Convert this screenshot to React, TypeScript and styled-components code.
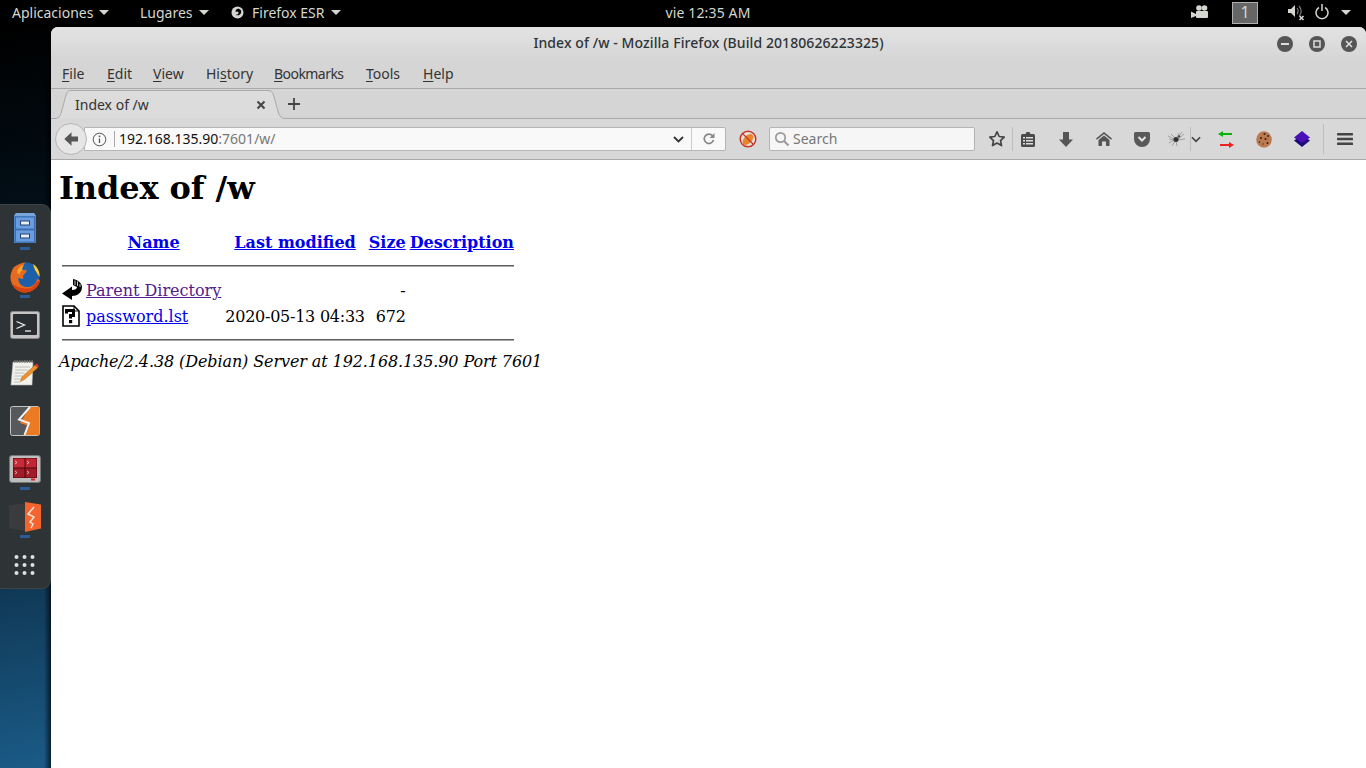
import React from "react";
import styled, { createGlobalStyle } from "styled-components";

const Global = createGlobalStyle`
  html, body { margin: 0; padding: 0; background: #000; overflow: hidden; }
  #root { width: 1366px; height: 768px; }
`;

const uiFont = `"Noto Sans", "Open Sans", sans-serif`;

const Screen = styled.div`
  width: 1366px;
  height: 768px;
  display: flex;
  flex-direction: column;
  overflow: hidden;
  background: #000;
  font-family: ${uiFont};
`;

/* ---------- GNOME top bar ---------- */
const TopBar = styled.header`
  height: 27px;
  flex: none;
  display: grid;
  grid-template-columns: 1fr auto 1fr;
  align-items: center;
  background: #000;
  color: #d3d7cf;
  font-size: 14px;
  padding-bottom: 3px;
  box-sizing: border-box;
`;
const TopLeft = styled.div`
  display: flex;
  align-items: center;
  padding-left: 12px;
`;
const TopMenu = styled.span<{ $w: number }>`
  display: flex;
  align-items: center;
  width: ${(p) => p.$w}px;
  white-space: nowrap;
`;
const Caret = styled.i`
  display: inline-block;
  width: 0;
  height: 0;
  margin-left: 6px;
  border-left: 5px solid transparent;
  border-right: 5px solid transparent;
  border-top: 5px solid #d3d7cf;
`;
const Clock = styled.div`
  margin-left: 50px;
  letter-spacing: 0.15px;
  white-space: nowrap;
`;
const TopRight = styled.div`
  display: flex;
  align-items: center;
  justify-content: flex-end;
  padding-right: 15px;
`;
const WorkspaceBox = styled.span`
  width: 26px;
  height: 22px;
  margin: 2px 30px 0 23px;
  padding-bottom: 2px;
  box-sizing: border-box;
  background: #666;
  border: 1px solid #b0b0b0;
  color: #d3d7cf;
  display: flex;
  align-items: center;
  justify-content: center;
  font-size: 16px;
`;

/* ---------- Desktop ---------- */
const Desktop = styled.div`
  flex: 1;
  display: flex;
  min-height: 0;
`;
const Wallpaper = styled.aside`
  width: 51px;
  flex: none;
  display: flex;
  flex-direction: column;
  justify-content: center;
  background:
    linear-gradient(90deg, transparent 44px, rgba(0, 0, 0, 0.65) 51px),
    linear-gradient(170deg, #000 0%, #020d15 22%, #0f3450 72%, #1a5b87 100%);
`;
const Dock = styled.nav`
  width: 51px;
  height: 385px;
  box-sizing: border-box;
  margin-top: -2px;
  background: #2e3335;
  border: 1px solid #3f4446;
  border-left: none;
  border-radius: 0 9px 9px 0;
`;
const DockItem = styled.div<{ $running?: boolean }>`
  height: 48px;
  display: flex;
  align-items: center;
  justify-content: center;
  position: relative;
  padding-right: 1px;
  &::after {
    content: "";
    display: ${(p) => (p.$running ? "block" : "none")};
    position: absolute;
    left: 20px;
    bottom: 3px;
    width: 10px;
    height: 3px;
    background: #2a5c99;
  }
`;

/* ---------- Firefox window ---------- */
const Window = styled.main`
  flex: 1;
  min-width: 0;
  display: flex;
  flex-direction: column;
  background: #fff;
  border-radius: 7px 7px 0 0;
  overflow: hidden;
`;
const TitleBar = styled.div`
  height: 33px;
  flex: none;
  box-sizing: border-box;
  padding-bottom: 2px;
  position: relative;
  display: flex;
  align-items: center;
  justify-content: center;
  background: linear-gradient(180deg, #e3e3e3 0%, #d5d5d5 100%);
  color: #2e3436;
  font-size: 14px;
  font-weight: 500;
  letter-spacing: 0.08px;
`;
const WindowButtons = styled.div`
  position: absolute;
  right: 9px;
  top: 9px;
  display: flex;
  gap: 16px;
`;
const WinButton = styled.span`
  width: 16px;
  height: 16px;
  border-radius: 50%;
  background: #555;
  display: flex;
  align-items: center;
  justify-content: center;
`;
const MenuBar = styled.div`
  flex: none;
  box-sizing: border-box;
  height: 29px;
  display: flex;
  align-items: center;
  padding: 0 0 1px 11px;
  background: #d5d5d5;
  border-bottom: 1px solid #a9a9a9;
  color: #333;
  font-size: 14px;
`;
const MenuItem = styled.span<{ $w: number; $tight?: boolean }>`
  width: ${(p) => p.$w}px;
  flex: none;
  white-space: nowrap;
  letter-spacing: ${(p) => (p.$tight ? "-0.55px" : "0")};
  u { text-underline-offset: 2px; }
`;
const TabBar = styled.div`
  height: 30px;
  flex: none;
  display: flex;
  background: #d5d5d5;
`;
const Tab = styled.div`
  width: 234px;
  flex: none;
  position: relative;
  display: flex;
  align-items: center;
  box-sizing: border-box;
  padding: 1px 19px 0 24px;
  color: #333;
  font-size: 14px;
`;
const TabShape = styled.svg`
  position: absolute;
  inset: 0;
`;
const TabTitle = styled.span`
  flex: 1;
  position: relative;
`;
const TabClose = styled.svg`
  position: relative;
`;
const TabRest = styled.div`
  flex: 1;
  display: flex;
  align-items: center;
  padding: 1px 0 0 2px;
  border-bottom: 1px solid #a9a9a9;
`;
const NavBar = styled.div`
  height: 40px;
  flex: none;
  position: relative;
  display: flex;
  align-items: center;
  background: #d8d8d8;
  border-bottom: 1px solid #a9a9a9;
  padding-left: 33px;
`;
const BackButton = styled.span`
  position: absolute;
  left: 4px;
  top: 4px;
  width: 32px;
  height: 32px;
  box-sizing: border-box;
  border-radius: 50%;
  border: 1px solid #b5b5b5;
  background: #e6e6e6;
  display: flex;
  align-items: center;
  justify-content: center;
  z-index: 1;
`;
const UrlBar = styled.div`
  width: 642px;
  height: 24px;
  box-sizing: border-box;
  display: flex;
  align-items: center;
  background: #f9f9f9;
  border: 1px solid #b5b5b5;
  border-radius: 0 2px 2px 0;
  padding-left: 7px;
  font-size: 14px;
  flex: none;
`;
const InfoSlot = styled.span`
  width: 22px;
  height: 16px;
  flex: none;
  display: flex;
  align-items: center;
  border-right: 1px solid #aaa;
  margin-right: 4px;
`;
const UrlText = styled.span`
  flex: 1;
  color: #111;
  padding-bottom: 1px;
  em { font-style: normal; color: #777; }
`;
const ChevronSlot = styled.span`
  width: 20px;
  box-sizing: border-box;
  padding-right: 6px;
  display: flex;
  align-items: center;
  justify-content: center;
`;
const ReloadSlot = styled.span`
  width: 33px;
  height: 22px;
  display: flex;
  align-items: center;
  justify-content: center;
  border-left: 1px solid #ccc;
`;
const BlockSlot = styled.span`
  width: 43px;
  flex: none;
  display: flex;
  justify-content: center;
`;
const SearchBox = styled.div`
  width: 206px;
  height: 24px;
  flex: none;
  box-sizing: border-box;
  display: flex;
  align-items: center;
  gap: 3px;
  padding: 0 0 1px 4px;
  background: #f6f6f6;
  border: 1px solid #b5b5b5;
  border-radius: 2px;
  color: #777;
  font-size: 14px;
`;
const ToolSlot = styled.span<{ $w: number; $ml?: number }>`
  width: ${(p) => p.$w}px;
  margin-left: ${(p) => p.$ml ?? 0}px;
  flex: none;
  display: flex;
  align-items: center;
  justify-content: center;
`;
const ToolSep = styled.span<{ $h: number; $ml?: number }>`
  width: 1px;
  height: ${(p) => p.$h}px;
  margin-left: ${(p) => p.$ml ?? 0}px;
  flex: none;
  background: #bdbdbd;
`;

/* ---------- Document ---------- */
const Page = styled.div`
  flex: 1;
  background: #fff;
  color: #000;
  padding: 9px 8px 8px;
  font-family: "DejaVu Serif", serif;
  font-size: 16px;
  overflow: hidden;
  a:link { color: #0000ee; }
  a.visited { color: #551a8b; }
  h1 { margin: 0 0 21.44px; font-size: 32px; letter-spacing: -0.1px; }
  hr {
    margin: 8px 0;
    height: 0;
    border: none;
    border-top: 1px solid #5f5f5f;
    border-bottom: 1px solid #a8a8a8;
  }
  table { border-spacing: 2px; }
  th, td { padding: 1px; }
  th { text-align: center; }
  address { font-style: italic; letter-spacing: -0.1px; }
  td svg { display: block; }
`;
const Gap = styled.span`
  display: block;
  width: 20px;
  height: 22px;
`;
const Right = styled.td`
  text-align: right;
`;
const NumCell = styled(Right)`
  letter-spacing: -0.25px;
`;

const BackIcon = () => (
  <svg width="16" height="16" viewBox="0 0 16 16">
    <path d="M8.500 1.200 1.300 8l7.200 6.800V10.600H15V5.400H8.500z" fill="#555" />
  </svg>
);

const Down = ({ color = "#555" }: { color?: string }) => (
  <svg width="11" height="7" viewBox="0 0 11 7">
    <path d="M1 1l4.500 4.500L10 1" fill="none" stroke={color} strokeWidth="1.800" />
  </svg>
);

const ParentIcon = () => (
  <svg width="20" height="22" viewBox="0 0 20 22">
    <path d="M11 0C16 1 20 4 20 8c0 6-5 9-10 9v4L0 14.500 10 7.500V11c3 0 5-1 5-3l-4-2z" fill="#000" />
    <path d="M13 1.500v4.500M15.500 2.500v4.500M18 5v3" stroke="#fff" strokeWidth=".8" />
  </svg>
);

const UnknownIcon = () => (
  <svg width="20" height="22" viewBox="0 0 20 22">
    <path d="M1 1h11l5 5v15H1z" fill="#fff" stroke="#000" strokeWidth="1.600" />
    <path d="M12 1v5h5" fill="none" stroke="#000" />
    <path d="M4.500 8.500V5.500h7v5H8.500v3" fill="none" stroke="#000" strokeWidth="3" />
    <rect x="7" y="15" width="3.200" height="3.200" fill="#000" />
  </svg>
);

const FilesIcon = () => (
  <svg width="24" height="32" viewBox="0 0 24 32">
    <path d="M3 0h18l2 3v27H1V3z" fill="#4a86cf" />
    <path d="M3 0h18l2 3H1z" fill="#7aa5dc" />
    <rect x="2.500" y="4" width="19" height="12" fill="#6a9de0" stroke="#2e5f9f" strokeWidth=".7" />
    <rect x="2.500" y="17" width="19" height="12" fill="#6a9de0" stroke="#2e5f9f" strokeWidth=".7" />
    <rect x="7.500" y="8" width="9" height="4" fill="#e8eef6" stroke="#22436f" />
    <rect x="7.500" y="21" width="9" height="4" fill="#e8eef6" stroke="#22436f" />
  </svg>
);

const FirefoxIcon = () => (
  <svg width="32" height="32" viewBox="0 0 32 32">
    <circle cx="17" cy="15" r="13.500" fill="#1d5fa8" />
    <path d="M24 3c4 2.500 7 7 6.500 13L26 9z" fill="#ffcb2e" />
    <path d="M16 1.500C9 3 4.500 5 3 9.500 1 14 0.800 18 3 23c3 6 9 9 14 8.500 7-.5 13-6 14-12.500l-3-1c-.8 5-5.500 8.500-10.500 8-5.500-.5-9-5-8-9.500 1.500 1.500 3.500 1.500 5 1-.8-2-.8-3.500 1.500-5 1.500-1 2-2.500 1-4-1.500 1-4 1-5-.5 1.500-2.500 3-5 5-7z" fill="#e66a1f" />
    <path d="M3 23c3 6 9 9 14 8.500 7-.5 13-6 14-12.500l-4 2c-2 5-6 7-11 6.500-6-.5-10-3-13-4.500z" fill="#d8420f" />
    <path d="M15 4c-1.500 2-2 3.500-1.500 5.500-1.800.5-3 2-2.500 4L8 12c0-3 2-7 7-8z" fill="#f8a32a" />
  </svg>
);

const TerminalIcon = () => (
  <svg width="30" height="28" viewBox="0 0 30 28">
    <rect x=".5" y=".5" width="29" height="27" rx="2" fill="#c4c4c4" stroke="#888" />
    <rect x="3" y="3" width="24" height="21" rx="1" fill="#2b2e30" />
    <path d="M6.500 10.500l8 3.500-8 3.500" fill="none" stroke="#eee" strokeWidth="1.300" />
    <path d="M15 20h6" stroke="#eee" strokeWidth="1.300" />
  </svg>
);

const NotepadIcon = () => (
  <svg width="30" height="28" viewBox="0 0 30 28">
    <path d="M3 3h20l-1 23H1z" fill="#f2f2ec" stroke="#bbb" strokeWidth=".6" />
    <path d="M4 2.500h19" stroke="#777" strokeWidth="2.500" strokeDasharray="1.500 1" />
    <path d="M5 8h15M5 11h13M4.500 14h10M4.500 17h8M4 20h7M4 23h6" stroke="#bcbcbc" strokeWidth="1.200" />
    <path d="M25 6l3 2.500L15 20l-4.500 2.500L12 18z" fill="#f0902c" stroke="#a65b10" strokeWidth=".5" />
    <path d="M25 6l1.500-1.500L29 7l-1 1.500z" fill="#d9343a" />
  </svg>
);

const BoltIcon = () => (
  <svg width="30" height="30" viewBox="0 0 30 30">
    <rect x=".5" y=".5" width="29" height="29" rx="2" fill="#55595c" stroke="#c4c4c4" />
    <path d="M20 1h8.500a1 1 0 0 1 1 1v26a1 1 0 0 1-1 1H15l4-9-9-3z" fill="#ec7a22" />
    <path d="M20 1 9 13.500l10 3.500-4.500 12" fill="none" stroke="#f2f2f2" strokeWidth="2" />
  </svg>
);

const RedTermIcon = () => (
  <svg width="32" height="28" viewBox="0 0 32 28">
    <rect x=".5" y=".5" width="31" height="27" rx="2.500" fill="#bdbdbd" stroke="#777" />
    <rect x="4" y="3" width="24" height="20" fill="#4a0810" />
    <rect x="4.500" y="3.500" width="11" height="9" fill="#c92a38" />
    <rect x="16.500" y="3.500" width="11" height="9" fill="#c02633" />
    <rect x="4.500" y="13.500" width="11" height="9" fill="#a11b28" />
    <rect x="16.500" y="13.500" width="11" height="9" fill="#a11b28" />
    <path d="M6 6l2 1.500L6 9M18 6l2 1.500L18 9M6 16l2 1.500L6 19M18 16l2 1.500L18 19" fill="none" stroke="#eee" strokeWidth=".7" />
    <rect x="22" y="23.500" width="4" height="2" fill="#d22" />
  </svg>
);

const BurpIcon = () => (
  <svg width="32" height="30" viewBox="0 0 32 30">
    <path d="M17 1L0 3.500v23L17 29z" fill="#3a3b3c" />
    <path d="M16 0l16 2.500v24L16 30z" fill="#f4642e" />
    <path d="M25 5l-6 7 6 3-4 5 3 2-2 4" fill="none" stroke="#fbe3d8" strokeWidth="1.500" />
  </svg>
);

const AppsIcon = () => (
  <svg width="22" height="22" viewBox="0 0 22 22" fill="#dfdfdf">
    {[3, 11, 19].map((y) =>
      [2.500, 10.500, 18.500].map((x) => <circle key={`${x}-${y}`} cx={x} cy={y} r="2" />)
    )}
  </svg>
);

export default function App() {
  return (
    <Screen>
      <Global />
      <TopBar>
        <TopLeft>
          <TopMenu $w={128}>
            Aplicaciones<Caret />
          </TopMenu>
          <TopMenu $w={91}>
            Lugares<Caret />
          </TopMenu>
          <TopMenu $w={120}>
            <svg width="13" height="13" viewBox="0 0 13 13" style={{ marginRight: 8 }}>
              <circle cx="6.500" cy="6.500" r="6" fill="#d3d7cf" />
              <path d="M6 3c3-1 5 2 4 4-1 2.500-4 3-5.500 1.500C6 9 8 8 7.500 6.500 7 5.500 5.500 5 4.500 6 4.500 4.500 5 3.500 6 3z" fill="#000" />
            </svg>
            Firefox ESR<Caret />
          </TopMenu>
        </TopLeft>
        <Clock>vie 12:35 AM</Clock>
        <TopRight>
          <svg width="18" height="14" viewBox="0 0 18 14" fill="#d3d7cf">
            <circle cx="8" cy="3" r="2.800" />
            <circle cx="13.500" cy="3" r="2.800" />
            <rect x="5" y="6" width="12" height="7" rx="1" />
            <path d="M0 6.500l5 2.500v2L0 13z" />
          </svg>
          <WorkspaceBox>1</WorkspaceBox>
          <svg width="17" height="18" viewBox="0 0 17 18" fill="none">
            <path d="M0 6h3l4-4v12l-4-4H0z" fill="#d3d7cf" />
            <path d="M9 5c1.500 2 1.500 4 0 6M11 3c2.500 3 2.500 7 .5 10" stroke="#777" strokeWidth="1.200" />
            <path d="M11.500 13l4 4M15.500 13l-4 4" stroke="#d3d7cf" strokeWidth="1.600" />
          </svg>
          <svg width="14" height="16" viewBox="0 0 14 16" fill="none" style={{ marginLeft: 10 }}>
            <path d="M4 3.500a6 6 0 1 0 6 0" stroke="#d3d7cf" strokeWidth="1.500" />
            <path d="M7 0v7" stroke="#d3d7cf" strokeWidth="1.500" />
          </svg>
          <Caret style={{ marginLeft: 12 }} />
        </TopRight>
      </TopBar>

      <Desktop>
        <Wallpaper>
          <Dock>
            <DockItem $running><FilesIcon /></DockItem>
            <DockItem $running><FirefoxIcon /></DockItem>
            <DockItem><TerminalIcon /></DockItem>
            <DockItem><NotepadIcon /></DockItem>
            <DockItem><BoltIcon /></DockItem>
            <DockItem $running><RedTermIcon /></DockItem>
            <DockItem $running><BurpIcon /></DockItem>
            <DockItem><AppsIcon /></DockItem>
          </Dock>
        </Wallpaper>

        <Window>
          <TitleBar>
            Index of /w - Mozilla Firefox (Build 20180626223325)
            <WindowButtons>
              <WinButton>
                <svg width="8" height="8" viewBox="0 0 8 8"><path d="M0 3h8v2H0z" fill="#ddd" /></svg>
              </WinButton>
              <WinButton>
                <svg width="8" height="8" viewBox="0 0 8 8"><rect x="1" y="1" width="6" height="6" fill="none" stroke="#ddd" strokeWidth="1.500" /></svg>
              </WinButton>
              <WinButton>
                <svg width="8" height="8" viewBox="0 0 8 8"><path d="M1 1l6 6M7 1L1 7" stroke="#ddd" strokeWidth="1.600" /></svg>
              </WinButton>
            </WindowButtons>
          </TitleBar>
          <MenuBar>
            <MenuItem $w={45}><u>F</u>ile</MenuItem>
            <MenuItem $w={46}><u>E</u>dit</MenuItem>
            <MenuItem $w={53}><u>V</u>iew</MenuItem>
            <MenuItem $w={68}>Hi<u>s</u>tory</MenuItem>
            <MenuItem $w={92} $tight><u>B</u>ookmarks</MenuItem>
            <MenuItem $w={57}><u>T</u>ools</MenuItem>
            <MenuItem $w={40}><u>H</u>elp</MenuItem>
          </MenuBar>
          <TabBar>
            <Tab>
              <TabShape width="234" height="30" viewBox="0 0 234 30">
                <path
                  d="M0 29.500h4c3 0 5-2 6-5L15 6c1-3 2.500-4.500 5-4.500h197c3 0 4.500 1.500 5.500 4.500l5 18c1 3 3 5.500 6.500 5.500"
                  fill="#dcdcdc"
                  stroke="#a9a9a9"
                />
              </TabShape>
              <TabTitle>Index of /w</TabTitle>
              <TabClose width="10" height="10" viewBox="0 0 10 10">
                <path d="M1.500 1.500l7 7M8.500 1.500l-7 7" stroke="#444" strokeWidth="2" />
              </TabClose>
            </Tab>
            <TabRest>
              <svg width="14" height="14" viewBox="0 0 14 14">
                <path d="M7 1v12M1 7h12" stroke="#444" strokeWidth="1.800" />
              </svg>
            </TabRest>
          </TabBar>
          <NavBar>
            <BackButton><BackIcon /></BackButton>
            <UrlBar>
              <InfoSlot>
                <svg width="15" height="15" viewBox="0 0 15 15" fill="none">
                  <circle cx="7.500" cy="7.500" r="6.300" stroke="#555" />
                  <path d="M7.500 6.500V11" stroke="#555" strokeWidth="1.300" />
                  <circle cx="7.500" cy="4.300" r=".9" fill="#555" />
                </svg>
              </InfoSlot>
              <UrlText>192.168.135.90<em>:7601/w/</em></UrlText>
              <ChevronSlot><Down color="#333" /></ChevronSlot>
              <ReloadSlot>
                <svg width="14" height="14" viewBox="0 0 14 14" fill="none">
                  <path d="M11.500 8a4.700 4.700 0 1 1-1-4.300" stroke="#888" strokeWidth="1.700" />
                  <path d="M12.500 1v5h-5z" fill="#888" />
                </svg>
              </ReloadSlot>
            </UrlBar>
            <BlockSlot>
              <svg width="18" height="18" viewBox="0 0 18 18" fill="none">
                <circle cx="9" cy="9" r="7.800" fill="#e9e4dc" stroke="#c8332b" strokeWidth="1.500" />
                <ellipse cx="9" cy="9.500" rx="6.500" ry="4" transform="rotate(-45 9 9.500)" fill="#e8852a" />
                <path d="M3.500 3.500l11 11" stroke="#c8332b" strokeWidth="1.300" />
              </svg>
            </BlockSlot>
            <SearchBox>
              <svg width="16" height="16" viewBox="0 0 16 16" fill="none">
                <circle cx="6.500" cy="6.500" r="4.700" stroke="#999" strokeWidth="1.700" />
                <path d="M10 10l4.500 4.500" stroke="#999" strokeWidth="2" />
              </svg>
              Search
            </SearchBox>
            <ToolSlot $w={30} $ml={7}>
              <svg width="18" height="18" viewBox="0 0 18 18">
                <path d="M9 1.800l2.200 4.700 5 .6-3.700 3.500 1 5L9 13l-4.500 2.600 1-5L1.800 7.100l5-.6z" fill="none" stroke="#444" strokeWidth="1.700" strokeLinejoin="round" />
              </svg>
            </ToolSlot>
            <ToolSep $h={24} />
            <ToolSlot $w={30}>
              <svg width="14" height="16" viewBox="0 0 14 16" fill="#4a4a4a">
                <path d="M1.500 3H4.500L5.500 1h3l1 2h3A1.500 1.500 0 0 1 14 4.500v10a1.500 1.500 0 0 1-1.500 1.500h-11A1.500 1.500 0 0 1 0 14.500v-10A1.500 1.500 0 0 1 1.500 3z" />
                <path d="M2 6h2v1.500H2zM5 6h7v1.500H5zM2 9h2v1.500H2zM5 9h7v1.500H5zM2 12h2v1.500H2zM5 12h7v1.500H5z" fill="#ddd" />
              </svg>
            </ToolSlot>
            <ToolSlot $w={38} $ml={4}>
              <svg width="14" height="15" viewBox="0 0 14 15"><path d="M4 0h6v7.500h4L7 15 0 7.500h4z" fill="#555" /></svg>
            </ToolSlot>
            <ToolSlot $w={38}>
              <svg width="16" height="14" viewBox="0 0 16 14" fill="#555">
                <path d="M8 0l8 6.500-1 1.200L8 2 1 7.700 0 6.500z" />
                <path d="M8 3.500l5.500 4.500v6H10V9.500H6V14H2.500V8z" />
              </svg>
            </ToolSlot>
            <ToolSlot $w={38}>
              <svg width="16" height="15" viewBox="0 0 16 15">
                <path d="M1.500 0h13A1.500 1.500 0 0 1 16 1.500V7a8 8 0 0 1-16 0V1.500A1.500 1.500 0 0 1 1.500 0z" fill="#595959" />
                <path d="M4.500 5L8 8.500 11.500 5" fill="none" stroke="#e4e4e4" strokeWidth="2" />
              </svg>
            </ToolSlot>
            <ToolSlot $w={27} $ml={2}>
              <svg width="17" height="14" viewBox="0 0 17 14" fill="none">
                <path d="M0 4l6 3M1 7l5 1M1 11l5-3M4 14l3-5M9 14l-1-5M11 1L9 6M16 2l-6 5M17 7l-7 1M14 0l-3 4M3 2l4 4" stroke="#888" strokeWidth=".7" />
                <circle cx="8" cy="7.500" r="2.500" fill="#333" />
                <circle cx="11" cy="4.500" r="1.300" fill="#555" />
              </svg>
            </ToolSlot>
            <ToolSep $h={24} />
            <ToolSlot $w={10}><Down color="#444" /></ToolSlot>
            <ToolSlot $w={38} $ml={6}>
              <svg width="16" height="17" viewBox="0 0 16 17">
                <path d="M5 0v2h9v2H5v2L0 3z" fill="#0ab30a" />
                <path d="M11 11v2H2v2h9v2l5-3z" fill="#f02020" />
              </svg>
            </ToolSlot>
            <ToolSlot $w={38}>
              <svg width="16" height="17" viewBox="0 0 16 17">
                <ellipse cx="8" cy="8.500" rx="7.800" ry="8.300" fill="#bd7a50" />
                <g fill="#222">
                  <circle cx="8.500" cy="3" r="1" /><circle cx="12" cy="5" r=".9" /><circle cx="5" cy="7" r="1" />
                  <circle cx="9.500" cy="8" r="1" /><circle cx="3.500" cy="11" r=".8" /><circle cx="11.500" cy="12" r="1" /><circle cx="7" cy="13" r=".7" />
                </g>
              </svg>
            </ToolSlot>
            <ToolSlot $w={38}>
              <svg width="16" height="16" viewBox="0 0 16 16">
                <path d="M0 9.500l8-5 8 5-8 6.500z" fill="#1b0a78" />
                <path d="M0 6.500L8 0l8 6.500L8 12z" fill="#4a0fb5" />
              </svg>
            </ToolSlot>
            <ToolSep $h={30} $ml={2} />
            <ToolSlot $w={42}>
              <svg width="16" height="12" viewBox="0 0 16 12" fill="#444">
                <rect width="16" height="2.400" rx=".6" />
                <rect y="4.800" width="16" height="2.400" rx=".6" />
                <rect y="9.600" width="16" height="2.400" rx=".6" />
              </svg>
            </ToolSlot>
          </NavBar>

          <Page>
            <h1>Index of /w</h1>
            <table>
              <tbody>
                <tr>
                  <th><Gap /></th>
                  <th><a href="#name">Name</a></th>
                  <th><a href="#modified">Last modified</a></th>
                  <th><a href="#size">Size</a></th>
                  <th><a href="#description">Description</a></th>
                </tr>
                <tr><th colSpan={5}><hr /></th></tr>
                <tr>
                  <td><ParentIcon /></td>
                  <td><a className="visited" href="#parent">Parent Directory</a></td>
                  <td>&nbsp;</td>
                  <Right>-</Right>
                  <td>&nbsp;</td>
                </tr>
                <tr>
                  <td><UnknownIcon /></td>
                  <td><a href="#password">password.lst</a></td>
                  <NumCell>2020-05-13 04:33</NumCell>
                  <NumCell>672</NumCell>
                  <td>&nbsp;</td>
                </tr>
                <tr><th colSpan={5}><hr /></th></tr>
              </tbody>
            </table>
            <address>Apache/2.4.38 (Debian) Server at 192.168.135.90 Port 7601</address>
          </Page>
        </Window>
      </Desktop>
    </Screen>
  );
}
